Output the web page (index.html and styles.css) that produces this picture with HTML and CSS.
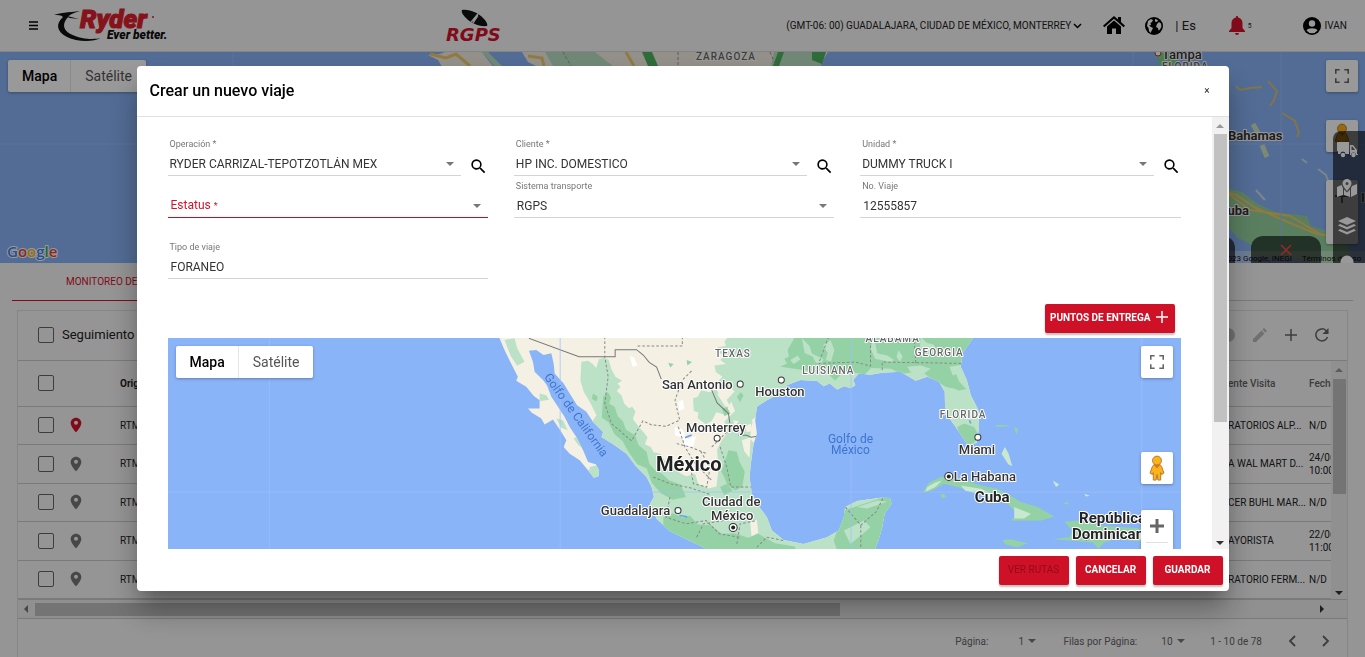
FILE: index.html
```html
<!DOCTYPE html>
<html lang="es">

<head>
    <meta charset="UTF-8">
    <title>RGPS - Crear un nuevo viaje</title>
    <link rel="stylesheet" href="styles.css">
</head>

<body>
    <!-- iconos compartidos -->
    <svg class="sprite" aria-hidden="true">
        <symbol id="pin" viewBox="0 0 24 24">
            <path fill-rule="evenodd" d="M12 1C7.600 1 4 4.600 4 9c0 5.800 8 14 8 14s8-8.200 8-14c0-4.400-3.600-8-8-8zm0 10.500a3 3 0 1 1 0-6 3 3 0 0 1 0 6z"/>
        </symbol>
        <symbol id="search" viewBox="0 0 24 24">
            <path d="M15.500 14h-.8l-.3-.3A6.500 6.500 0 1 0 13.700 14.400l.3.3v.8l5 5 1.500-1.500-5-5zm-6 0a4.500 4.500 0 1 1 0-9 4.500 4.500 0 0 1 0 9z"/>
        </symbol>
        <symbol id="fullscreen" viewBox="0 0 18 18">
            <path d="M0 0v6h2V2h4V0H0zm16 0h-4v2h4v4h2V0h-2zm0 16h-4v2h6v-6h-2v4zM2 12H0v6h6v-2H2v-4z"/>
        </symbol>
        <symbol id="pegman" viewBox="0 0 16 28">
            <path fill="#fbb31c" stroke="#b1762a" d="M3 12.500l-2.500 7 2.500 1.500 1-2v8h3l1-6 1 6h3v-8l1 2 2.500-1.500-2.500-7-2-2.500H5z"/>
            <path fill="#e8711a" d="M4.500 10.500h7L8 14.500z"/>
            <circle cx="8" cy="6" r="4.800" fill="#fbb31c" stroke="#b1762a"/>
        </symbol>
        <symbol id="chevron" viewBox="0 0 12 12">
            <path d="M4 1l5 5-5 5" fill="none" stroke="currentColor" stroke-width="1.800"/>
        </symbol>
        <symbol id="plus" viewBox="0 0 12 12">
            <path d="M6 0v12M0 6h12" stroke="currentColor" stroke-width="1.500"/>
        </symbol>
    </svg>

    <header class="topbar">
        <button class="menu-btn" aria-label="Menú">
            <svg width="9" height="9" viewBox="0 0 9 9"><path d="M0 1h9M0 4.500h9M0 8h9" stroke="#000" stroke-width="1.500"/></svg>
        </button>
        <svg class="ryder" width="116" height="32" viewBox="0 0 116 32" role="img" aria-label="Ryder">
            <path fill="#111" d="M0 5c9-3 19-3 26-4-7 2-11 4-12 6-8 9-4 17 14 21 8 1.500 14 1 19 0-8 4-24 4-34-1C3 22 1 14 9 7 7 5 4 5 0 5z"/>
            <path fill="#111" d="M5 4l20 5-9-1z"/>
            <text x="26" y="18" class="ryder-name">Ryder</text>
            <text x="53" y="29" class="ryder-slogan">Ever better.</text>
            <circle cx="99" cy="7" r="1" fill="#e0202f"/>
        </svg>
        <svg class="rgps" width="58" height="34" viewBox="0 0 58 34" role="img" aria-label="RGPS">
            <path fill="#111" d="M16 1c8-1 16 3 21 8 3 3 5 6 4 8-8 1-16-3-21-8-3-3-5-6-4-8z"/>
            <path d="M33 3L24 14l4-3-2 5 6-9" fill="#fff" stroke="#e9e9e9"/>
            <text x="0" y="32" class="rgps-name">RGPS</text>
        </svg>
        <button class="timezone">(GMT-06: 00) GUADALAJARA, CIUDAD DE MÉXICO, MONTERREY
            <svg width="9" height="6" viewBox="0 0 9 6"><path d="M1 1l3.500 3.500L8 1" fill="none" stroke="#000" stroke-width="1.500"/></svg>
        </button>
        <button class="icon-btn home" aria-label="Inicio">
            <svg width="22" height="19" viewBox="0 0 22 19"><path d="M11 0l4 3.500V1h3v5l4 3.700-1.300 1.500L11 2.800l-9.700 8.400L0 9.700zM11 4.500l7 6V18h-5v-5.500H9V18H4v-7.500z"/></svg>
        </button>
        <button class="lang">
            <svg width="18" height="18" viewBox="0 0 18 18"><circle cx="9" cy="9" r="9"/><path fill="#fff" d="M3 4l3-2 2 1-1 2-1.500 1 .5 2-2 .5 2 1.500 2 1-1.500 3-1 2-1.500-2-.5-3L2 9zM10 2l3 1-1 2-2-.5zM12 7l2-2 2 1.500.5 3-1.500 3-1.500 1-.5-2.500-2-1z"/></svg>
            <span>| Es</span>
        </button>
        <button class="bell">
            <svg width="16" height="19" viewBox="0 0 16 19"><path fill="#d6122b" d="M8 0a1 1 0 0 1 1 1.500c3 .5 4.500 3 4.500 5.500v5L16 15v1H0v-1l2.500-3V7C2.500 4.500 4 2 7 1.500A1 1 0 0 1 8 0zM6 17h4a2 2 0 0 1-4 0z"/></svg>
            <sup>5</sup>
        </button>
        <button class="user">
            <svg width="18" height="18" viewBox="0 0 18 18"><circle cx="9" cy="9" r="9"/><circle cx="9" cy="6.500" r="3.200" fill="#fff"/><path fill="#fff" d="M3.500 13.500c1-3 10-3 11 0A7 7 0 0 1 3.500 13.500z"/></svg>
            IVAN
        </button>
    </header>

    <section class="map page-map">
        <svg class="map-canvas" viewBox="0 0 1365 211" preserveAspectRatio="xMidYMin slice">
            <rect width="1365" height="211" fill="#8ab4f8"/>
            <path fill="#f5f0e4" d="M428 3l12-1 5-2h37l6 8 8 10h-52l-6-10zM522 0h306l-5 8-6 8H540l-12-6z"/>
            <path fill="#bbe2c6" d="M545 0h50l10 8 8 6h-60zM774 0h52l-5 14h-50zM482 0h6l14 14h-8z"/>
            <path fill="#4fb45f" d="M642 0h10l6 14h-10zM778 0h6l-5 14h-6zM812 0h14l-4 12-10-4z"/>
            <path d="M430 2l16 4 10-4 14 12M528 4l14 2 2 8M626 0l8 14" fill="none" stroke="#f0cc6e" stroke-width="3"/>
            <path d="M563 0l8 14M678 0v14M770 0l6 14" fill="none" stroke="#999" stroke-dasharray="3 2"/>
            <path fill="#7fd083" d="M1154 0l4 8 2 8h16V0z"/>
            <!-- Bahamas -->
            <path d="M1236 34l4 4 10-2 12-1M1268 29l9 10-3 9-4 6M1282 61l13 8 4 12-2 4" fill="none" stroke="#d5c37c" stroke-width="2"/>
            <path d="M1253 72l5 9M1262 93l5 12" fill="none" stroke="#cfe5c4" stroke-width="5"/>
            <path d="M1302 107l5 4M1318 117l8 6 3 8M1256 138l9 10" fill="none" stroke="#cfe0e5" stroke-width="2"/>
            <!-- Cuba -->
            <path fill="#95d3a0" d="M1200 128l30 9 12 3 16 12 17 8 32 4 4 10 20 6 16 12 4 18-30 2-22-5-14-2-36-1 4-10-16-9-12-14-25-8z"/>
            <path d="M1210 135l26 8 20 13 34 15 24 10 20 4M1226 140l24 18 40 6 30 18" fill="none" stroke="#efcb6b" stroke-width="2"/>
            <path d="M1133 0v211M1281 0v211M233 0v211M0 92h1365" stroke="#9cc1fa" fill="none"/>
            <text x="696" y="8" class="state">ZARAGOZA</text>
            <circle cx="1158" cy="1" r="3" fill="#fff" stroke="#b33"/>
            <text x="1162" y="7" class="city">Tampa</text>
            <text x="1162" y="18" class="state">FLORIDA</text>
            <text x="1228" y="88" class="city heavy">Bahamas</text>
            <text x="1219" y="163" class="city heavy">Cuba</text>
            <text x="1361" y="150" class="city">I</text>
            <text x="7" y="205" class="google"><tspan fill="#4285f4">G</tspan><tspan fill="#ea4335">o</tspan><tspan fill="#fbbc05">o</tspan><tspan fill="#4285f4">g</tspan><tspan fill="#34a853">l</tspan><tspan fill="#ea4335">e</tspan></text>
            <rect x="1222" y="199" width="143" height="12" fill="#f5f5f5" opacity=".4"/>
            <text x="1223" y="209" class="legal">2023 Google, INEGI</text>
            <text x="1302" y="209" class="legal">Términos de uso</text>
        </svg>
        <div class="map-type">
            <button class="active">Mapa</button>
            <button>Satélite</button>
        </div>
        <div class="map-tools">
            <button class="tool" aria-label="Pantalla completa"><svg width="14" height="14"><use href="#fullscreen"/></svg></button>
            <button class="tool" aria-label="Street View"><svg width="16" height="26"><use href="#pegman"/></svg></button>
            <button class="tool zoom" aria-label="Acercar"><svg width="14" height="14"><use href="#plus"/></svg></button>
        </div>
        <div class="bottom-tabs">
            <span class="bottom-tab"></span>
            <button class="bottom-tab" aria-label="Cerrar">
                <svg width="12" height="12" viewBox="0 0 12 12"><path d="M1 1l10 10M11 1L1 11" stroke="#ff4436" stroke-width="1.500"/></svg>
            </button>
        </div>
        <nav class="side-tools">
            <button aria-label="Unidades"><svg width="22" height="18" viewBox="0 0 22 18"><path d="M1 1h12v12H9.500a2.500 2.500 0 0 0-5 0H2V10H1zM14 4h3l4 5v4h1v1h-2a2.500 2.500 0 0 0-5 0h-1zM15.500 5.500V9H19l-2.500-3.500z" fill-rule="evenodd"/><circle cx="7" cy="14" r="2.200"/><circle cx="17.500" cy="14" r="2.200"/></svg></button>
            <button aria-label="Geocercas"><svg width="20" height="18" viewBox="0 0 20 18"><path fill-rule="evenodd" d="M10 0a4.500 4.500 0 0 1 4.500 4.500C14.500 7 10 12 10 12S5.500 7 5.500 4.500A4.500 4.500 0 0 1 10 0zm0 3a1.500 1.500 0 1 0 0 3 1.500 1.500 0 0 0 0-3z"/><path d="M0 8l4.500-2L6 9v7l-6 2zM7 10.500l3 3 3-3V18l-6-2zM14 9l1-2 5-2v10l-6 3z"/></svg></button>
            <button aria-label="Capas"><svg width="18" height="18" viewBox="0 0 18 18"><path d="M9 0l9 4-9 4-9-4zM2 7l7 3 7-3 2 1.500-9 4-9-4zM2 12l7 3 7-3 2 1.500-9 4-9-4z"/></svg></button>
            <button aria-label="Buscar"><svg width="14" height="18" viewBox="0 0 14 18"><circle cx="7" cy="7" r="6.500"/></svg></button>
        </nav>
    </section>

    <main class="page">
        <div class="tabs"><a href="#viajes" class="tab">MONITOREO DE VIAJES</a></div>
        <div class="card">
            <div class="card-head">
                <label><input type="checkbox"> Seguimiento</label>
                <div class="card-actions">
                    <button aria-label="Info"><svg width="14" height="14" viewBox="0 0 14 14"><circle cx="7" cy="7" r="7" fill="#bbb"/></svg></button>
                    <button aria-label="Editar"><svg width="14" height="14" viewBox="0 0 14 14"><path fill="#bbb" d="M0 11l8.500-8.500 3 3L3 14H0zM9.500 1.500L11 0l3 3-1.500 1.500z"/></svg></button>
                    <button aria-label="Agregar"><svg width="12" height="12"><use href="#plus"/></svg></button>
                    <button aria-label="Actualizar"><svg width="14" height="14" viewBox="0 0 14 14"><path d="M12.500 9A6 6 0 1 1 11 2.500L13 4.500" fill="none" stroke="currentColor" stroke-width="1.500"/><path d="M13.500 0v6h-6z" fill="currentColor"/></svg></button>
                </div>
            </div>
            <div class="grid">
                <table>
                    <thead>
                        <tr>
                            <th class="col-check"><input type="checkbox" aria-label="Todos"></th>
                            <th class="col-pin"></th>
                            <th class="origin">Origen</th>
                            <th class="col-visit">ente Visita</th>
                            <th class="col-date">Fecha</th>
                        </tr>
                    </thead>
                    <tbody>
                        <tr>
                            <td><input type="checkbox" aria-label="Viaje 1"></td>
                            <td><svg class="pin late"><use href="#pin"/></svg></td>
                            <td>RTM</td>
                            <td>RATORIOS ALP...</td>
                            <td>N/D</td>
                        </tr>
                        <tr>
                            <td><input type="checkbox" aria-label="Viaje 2"></td>
                            <td><svg class="pin"><use href="#pin"/></svg></td>
                            <td>RTM</td>
                            <td>A WAL MART D...</td>
                            <td>24/06<br>10:00</td>
                        </tr>
                        <tr>
                            <td><input type="checkbox" aria-label="Viaje 3"></td>
                            <td><svg class="pin"><use href="#pin"/></svg></td>
                            <td>RTM</td>
                            <td>CER BUHL MAR...</td>
                            <td>N/D</td>
                        </tr>
                        <tr>
                            <td><input type="checkbox" aria-label="Viaje 4"></td>
                            <td><svg class="pin"><use href="#pin"/></svg></td>
                            <td>RTM</td>
                            <td>AYORISTA</td>
                            <td>22/06<br>11:00</td>
                        </tr>
                        <tr>
                            <td><input type="checkbox" aria-label="Viaje 5"></td>
                            <td><svg class="pin"><use href="#pin"/></svg></td>
                            <td>RTM</td>
                            <td>RATORIO FERM...</td>
                            <td>N/D</td>
                        </tr>
                    </tbody>
                </table>
                <div class="scroll-y"><i class="up"></i><span class="thumb"></span><i class="down"></i></div>
            </div>
            <div class="scroll-x"><i class="left"></i><span class="track"><span class="thumb"></span></span><i class="right"></i></div>
            <div class="pager">
                <label for="pagina">Página:</label>
                <span class="mini-select"><select id="pagina"><option>1</option></select><i class="down"></i></span>
                <label for="filas">Filas por Página:</label>
                <span class="mini-select rows"><select id="filas"><option>10</option></select><i class="down"></i></span>
                <span class="range">1 - 10 de 78</span>
                <button aria-label="Anterior"><svg class="prev" width="12" height="12"><use href="#chevron"/></svg></button>
                <button aria-label="Siguiente"><svg width="12" height="12"><use href="#chevron"/></svg></button>
            </div>
        </div>
    </main>

    <div class="overlay">
        <div class="dialog" role="dialog" aria-labelledby="dialogTitle">
            <div class="dialog-head">
                <h1 id="dialogTitle">Crear un nuevo viaje</h1>
                <button class="close" aria-label="Cerrar">×</button>
            </div>
            <div class="dialog-main">
                <div class="dialog-body">
                    <form class="fields">
                        <div class="with-search">
                            <div class="field">
                                <label for="operacion">Operación *</label>
                                <div class="control"><select id="operacion"><option>RYDER CARRIZAL-TEPOTZOTLÁN MEX</option></select><i class="down"></i></div>
                            </div>
                            <button type="button" aria-label="Buscar operación"><svg width="19" height="19"><use href="#search"/></svg></button>
                        </div>
                        <div class="with-search">
                            <div class="field">
                                <label for="cliente">Cliente *</label>
                                <div class="control"><select id="cliente"><option>HP INC. DOMESTICO</option></select><i class="down"></i></div>
                            </div>
                            <button type="button" aria-label="Buscar cliente"><svg width="19" height="19"><use href="#search"/></svg></button>
                        </div>
                        <div class="with-search">
                            <div class="field">
                                <label for="unidad">Unidad *</label>
                                <div class="control"><select id="unidad"><option>DUMMY TRUCK I</option></select><i class="down"></i></div>
                            </div>
                            <button type="button" aria-label="Buscar unidad"><svg width="19" height="19"><use href="#search"/></svg></button>
                        </div>
                        <div class="field indent invalid">
                            <label for="estatus">Estatus <small>*</small></label>
                            <div class="control"><select id="estatus"><option></option></select><i class="down"></i></div>
                        </div>
                        <div class="field indent">
                            <label for="sistema">Sistema transporte</label>
                            <div class="control"><select id="sistema"><option>RGPS</option></select><i class="down"></i></div>
                        </div>
                        <div class="field indent">
                            <label for="viaje">No. Viaje</label>
                            <div class="control"><input id="viaje" type="text" value="12555857"></div>
                        </div>
                        <div class="field indent last">
                            <label for="tipo">Tipo de viaje</label>
                            <div class="control"><input id="tipo" type="text" value="FORANEO"></div>
                        </div>
                    </form>
                    <div class="delivery">
                        <button class="btn">PUNTOS DE ENTREGA <svg width="12" height="12"><use href="#plus"/></svg></button>
                    </div>
                    <div class="map">
                        <svg class="map-canvas" viewBox="0 0 1013 211" preserveAspectRatio="xMidYMin slice">
                            <rect width="1013" height="211" fill="#8ab4f8"/>
                            <g transform="translate(322 -8) scale(.3333)">
                                <clipPath id="land">
                                    <path d="M28 20L45 60 62 95 85 140 80 152 110 170 132 197 150 210 150 235 115 235 127 248 155 265 165 283 190 268 215 305 230 330 222 350 240 370 270 390 295 420 312 442 326 438 328 420 318 402 295 395 280 360 260 320 240 290 225 260 205 230 185 200 172 165 160 150 135 125 130 95 118 62 140 60 162 75 185 70 192 100 195 130 222 160 240 190 262 225 290 245 310 275 340 305 335 320 370 342 410 370 440 410 470 440 485 470 492 500 480 520 500 565 540 602 580 622 640 650 700 700H1150L1152 660 1165 625 1175 590 1182 550 1203 520 1198 503 1170 502 1100 512 1064 530 1060 560 1045 600 1010 620 940 640 880 628 845 600 830 560 800 520 785 490 778 440 782 400 790 342 800 310 795 270 800 230 830 210 870 190 890 165 930 150 980 153 1000 168 1018 160 1040 178 1062 168 1080 174 1095 165 1088 150 1105 130 1140 134 1175 128 1230 125 1275 152 1310 140 1345 155 1362 185 1363 230 1380 270 1395 290 1415 320 1430 343 1458 338 1465 290 1463 240 1440 195 1428 150 1410 110 1415 70 1450 20Z"/>
                                </clipPath>
                                <g clip-path="url(#land)">
                                    <rect width="1500" height="720" fill="#f5f0e4"/>
                                    <path fill="#bbe2c6" d="M45 30l30-5 8 30 22 40-22 12-20-30zM200 265l20 5 14 30-20-8zM252 325l12-8 16 38-14-10zM300 410l40-10v50h-50zM150 190l20 5 8 14-28 4z"/>
                                    <path fill="#bbe2c6" d="M275 95l20-3 14 10 10 12 8-26 16-6 14 8 8 28 12 22 20 12-4 18-12 12 14 14 8 24 14 14 10-4 10 14-8 22 16 22 18 20 10 14-8 20 18 8 8 16 20 4 14 22 30 14 14 22 20 10 26-8 10 30 30 14 24-6 6-50-4-60 12-24 20-30-10-30 30-30 30-10 24 40-8 50 22 26 10 80 500 20v280H500l-40-160-30-120-90-80-30-45-10-40 20-30-20-40-18-30-10-34z"/>
                                    <path fill="#bbe2c6" d="M715 20l-12 14 4 14-24 4-4 12 22 12-10 14 16 12-34 4 4 20 20 14-10 10 14 28 22-4 10 10-22 24-18-4-14-26-20 8-26-6-10 20-14 4 2 38 14 6-2 16 24 18 18-10 14-26 24 8 20-40 14 34 18 12 28 10 30-20 60-60H1500V0H715z"/>
                                    <path fill="#94d2a5" d="M340 200l14-14 10 16-6 18 16 10 10 28 16 16 8 24 28 18 10 28 24 20 8 36 20 22 18 8 22 20 34 12 16 38-40 8-36-20-26-30-16-44-28-12-24-34-20-36-24-20-18-36-20-14zM715 360l25 4 8 30 16 30-8 46-20 10-24-16-8-20-10-20zM695 235l16-4 10 20-18 6z"/>
                                    <path fill="#94d2a5" d="M870 110l20-10-8-14 14-6-4-20 20-36h600v40l-64 16 10 26-12 24-30-26-40 6 16 40-60 6-40-34-60 10-30-16-60-2-20 20-60-12-28 30-30-30-24 4zM1320 130l30-4 26 16 20-10 10 24 20 20-6 14-28-14-28-6-30-20zM1430 200l14 8 12 30-14-8zM1060 540l150-50-20 200h-140l-20-60zM520 560l28-12 30 14 22-6 24 26 40 2 30 26 40-2 40 14 30-12 50 28 60 10 10 50H600l-80-70z"/>
                                    <path fill="#bbe2c6" d="M935 25l22 22 8 24 34 16-8 18-16-10-8-16-24-10zM1020 30l12 30-10 34-16-4 6-20-14-24zM1150 20l10 50 30 6 20 14-10 6-46-10-14-30zM1290 20l18 18 22 6 12 32-18-2-12-18-24-4zM1224 60l12 20-8 16-10-16zM1060 600l60-30 20 20-60 50zM1100 530l60-20 30 4-60 20zM900 90l22-14 8 12-20 14zM1250 110l40-4 30 10-20 14-40-4z"/>
                                    <path fill="#bbe2c6" d="M1360 190l100-20 20 180h-70l-50-90z"/>
                                    <path fill="#94d2a5" d="M1400 290l20-10 30 10 16 30-30 30-30-30z"/>
                                    <path fill="#f5f0e4" d="M383 160l20-12 24 12-6 18 20 0 6 14-10 20-14-8 2-14-22-6zM475 205l14 6-4 14zM680 190l24 8 16 30-14 2zM625 158l16-10 6 14zM755 330l26-8-3 60-16-20zM780 575l20-8 4 40-20 10zM764 288l18-8 6 22-18 4zM730 270l14 2 4 30-16-10z"/>
                                    <path fill="#fff" d="M420 78l14 6 8 22-14 4zM565 215l14-6 4 26-16 8zM555 290l20 6 20 30 24-10-10 34-24 2-8-30-22-6z"/>
                                    <path fill="#94d2a5" d="M535 98l16 4-10 10zM590 90l16 6-14 10zM690 470l20-10 18 20-26 14zM310 190l14 10-4 14-14-8zM740 200l12-14 8 10-10 20z"/>
                                    <path fill="none" stroke="#6aa3ee" stroke-width="5" d="M585 322l20-8M568 555l24 4M1436 270l4 10"/>
                                    <path fill="none" stroke="#777" stroke-width="3" d="M118 25l150 55h108v-21h64l20 16 18 22 22 14 14 36M665 180l16 38 34 32 4 28M745 315l24 0 14 6 22-4"/>
                                    <path fill="none" stroke="#888" stroke-width="3" stroke-dasharray="8 6" d="M345 20v60l10 60-10 80 20 60 60 52 34-60 26 12 44 4 40-18-14-60 22-60 30-30M577 20v28H440M565 290l20 60 30 50 50 50M490 440l50 20 60 12 60 20M665 350l40-40 40-30M690 350l20 60 12 60h60M540 500l-12 60 60 20 60-10 40 40 60 10M600 400l10 60 40 10 10-60-30-50M560 340l40 10 50 20M620 620l20-40 60-10M740 640l10-60 50-10M800 650l30-30 50 10M985 100l110-4 45 12V30M1175 120v-24l240 4M1270 20l6 84M1015 20l-30 80M1065 530l46 54 46-40 20-40M1111 585v75h-70"/>
                                </g>
                                <g transform="translate(930 0)">
                                    <path fill="#94d2a5" d="M365 487l20-30 35-17 30 0 50 10 40 15 50 10 30 15 40 25 50 15 50 28-40 12h-90l20-20-30-30-60-20-60-20-30-10-40-10-35 20zM755 625l50-5 10-18-25-28 40-4 60 14 130 10 20 40-100-8-30 10-18 18-17-18zM605 628l25-2 50 12-30 12-36-8zM785 520l12-6 8 8zM418 492l12-2 6 10-10 4zM585 284l35 0 0 4-34 2zM640 290l12 6-6 18z"/>
                                    <path fill="#c8e8d0" d="M602 370l10-20 12 22 10 36-12-6zM480 465l60 10 50 22 30 6-6 12-60-20-60-14zM640 530l50 20-20 14-30 0zM380 470l24-14 20-6-20 20-30 14zM755 450l20 12-10 8zM850 490l16 6-12 2z"/>
                                    <path fill="none" stroke="#666" stroke-width="3" stroke-dasharray="7 5" d="M856 600v30M1024 632h30"/>
                                </g>
                            </g>
                            <path d="M102.500 0v211M392.500 0v211M682.500 0v211M972.500 0v211M0 153.500h1013" stroke="#9cc1fa" opacity=".7"/>
                            <g class="sea">
                                <text transform="translate(376 39) rotate(54)">Golfo de California</text>
                                <text x="682" y="105" text-anchor="middle">Golfo de</text>
                                <text x="682" y="116" text-anchor="middle">México</text>
                            </g>
                            <g class="state">
                                <text x="547" y="19">TEXAS</text>
                                <text x="634" y="36">LUISIANA</text>
                                <text x="697" y="4">ALABAMA</text>
                                <text x="746" y="18">GEORGIA</text>
                                <text x="771" y="80">FLORIDA</text>
                            </g>
                            <g class="city">
                                <text x="494" y="51">San Antonio</text>
                                <text x="587" y="58">Houston</text>
                                <text x="518" y="94">Monterrey</text>
                                <text x="433" y="177">Guadalajara</text>
                                <text x="534" y="168">Ciudad de</text>
                                <text x="543" y="181">México</text>
                                <text x="790" y="116">Miami</text>
                                <text x="785" y="143">La Habana</text>
                            </g>
                            <g class="country">
                                <text x="488" y="133" class="big">México</text>
                                <text x="806" y="164">Cuba</text>
                                <text x="910" y="184">República</text>
                                <text x="903" y="200">Dominicana</text>
                            </g>
                            <g fill="#fff" stroke="#333">
                                <circle cx="572" cy="46" r="3"/>
                                <circle cx="613" cy="42" r="3"/>
                                <circle cx="549" cy="100" r="3"/>
                                <circle cx="510" cy="172" r="3"/>
                                <circle cx="809" cy="99" r="3"/>
                                <circle cx="565" cy="189" r="4"/>
                                <circle cx="780" cy="138" r="4"/>
                            </g>
                            <g fill="#222"><circle cx="565" cy="189" r="2"/><circle cx="780" cy="138" r="2"/></g>
                        </svg>
                        <div class="map-type">
                            <button class="active">Mapa</button>
                            <button>Satélite</button>
                        </div>
                        <div class="map-tools roomy">
                            <button class="tool" aria-label="Pantalla completa"><svg width="14" height="14"><use href="#fullscreen"/></svg></button>
                            <button class="tool" aria-label="Street View"><svg width="16" height="26"><use href="#pegman"/></svg></button>
                            <button class="tool zoom" aria-label="Acercar"><svg width="22" height="24" viewBox="0 0 22 24"><path d="M11 0v14M4 7h14" stroke="#666" stroke-width="3"/><path d="M0 23.500h22" stroke="#e0e0e0"/></svg></button>
                        </div>
                    </div>
                </div>
                <div class="scroll-y"><i class="up"></i><span class="thumb"></span><i class="down"></i></div>
            </div>
            <div class="dialog-foot">
                <button class="btn" disabled>VER RUTAS</button>
                <button class="btn">CANCELAR</button>
                <button class="btn">GUARDAR</button>
            </div>
        </div>
    </div>
</body>

</html>
```

FILE: styles.css
```css
* {
    box-sizing: border-box;
}

body {
    margin: 0;
    height: 100vh;
    display: flex;
    flex-direction: column;
    overflow: hidden;
    background: #f8f8f8;
    color: #222;
    font-family: Roboto, "Liberation Sans", sans-serif;
    font-size: 10px;
}

button {
    display: flex;
    align-items: center;
    justify-content: center;
    padding: 0;
    border: 0;
    background: none;
    color: inherit;
    font: inherit;
    cursor: pointer;
}

select,
input[type="text"] {
    appearance: none;
    width: 100%;
    margin: 0;
    padding: 0;
    border: 0;
    outline: 0;
    background: none;
    color: inherit;
    font: inherit;
}

input[type="checkbox"] {
    appearance: none;
    display: block;
    width: 16px;
    height: 16px;
    margin: 0;
    border: 1px solid #666;
    border-radius: 2px;
}

.sprite {
    position: absolute;
    width: 0;
    height: 0;
}

/* arrows */
.down, .up {
    border: 4px solid transparent;
    border-bottom-width: 0;
    border-top-color: #777;
}

.up {
    border-width: 0 4px 4px;
    border-bottom-color: #999;
}

.left, .right {
    border: 4px solid transparent;
    border-left-width: 0;
    border-right-color: #777;
}

.right {
    border-width: 4px 0 4px 4px;
    border-left-color: #333;
}

/* top bar */
.topbar {
    display: flex;
    flex: none;
    align-items: center;
    height: 52px;
    padding: 0 18px 0 29px;
    border-bottom: 1px solid #ddd;
    background: #f8f8f8;
}

.ryder {
    margin: 0 276px 0 16px;
    overflow: visible;
}

.ryder-name {
    fill: #e0202f;
    stroke: #e0202f;
    font-size: 26px;
    font-style: italic;
    font-weight: 900;
}

.ryder-slogan {
    fill: #111;
    font-size: 12px;
    font-style: italic;
    font-weight: 900;
}

.rgps {
    overflow: visible;
}

.rgps-name {
    fill: #d6122b;
    font-family: "DejaVu Sans", sans-serif;
    font-size: 18px;
    font-style: italic;
    font-weight: 700;
}

.timezone {
    gap: 2px;
    margin-left: auto;
}

.home {
    margin-left: 21px;
}

.lang {
    gap: 12px;
    margin-left: 20px;
    font-size: 13px;
}

.bell {
    gap: 3px;
    margin-left: 33px;
    font-size: 8px;
}

.user {
    gap: 4px;
    margin-left: 51px;
}

/* maps */
.map {
    position: relative;
    flex: 1;
    min-height: 0;
    overflow: hidden;
    background: #8ab4f8;
}

.page-map {
    flex: 0 0 211px;
}

.map-canvas {
    display: block;
    width: 100%;
    height: 100%;
}

.map-canvas text {
    paint-order: stroke;
    stroke: #fff;
    stroke-width: 2px;
    stroke-linejoin: round;
}

.state, .state text {
    fill: #666;
    font-size: 10px;
    font-weight: 500;
    letter-spacing: 1px;
}

.city, .city text {
    fill: #333;
    font-size: 13px;
    font-weight: 500;
}

.heavy {
    font-weight: 700;
}

.country {
    fill: #222;
    font-size: 15px;
    font-weight: 700;
}

.country .big {
    font-size: 20px;
}

.map-canvas .sea text {
    fill: #3f74cf;
    font-size: 12px;
    stroke: none;
}

.google {
    font-family: "Open Sans", sans-serif;
    font-size: 15px;
    font-weight: 600;
}

.map-canvas .legal {
    fill: #111;
    font-size: 8px;
    stroke: none;
}

.map-type {
    position: absolute;
    top: 8px;
    left: 8px;
    display: flex;
    height: 32px;
    border-radius: 2px;
    background: #fff;
    box-shadow: 0 1px 3px rgba(0, 0, 0, .3);
    color: #565656;
    font-size: 14px;
}

.map-type button {
    padding: 0 14px;
}

.map-type .active {
    padding-right: 13px;
    border-right: 1px solid #e6e6e6;
    color: #000;
    font-weight: 500;
}

.map-tools {
    position: absolute;
    top: 8px;
    right: 7px;
    display: flex;
    flex-direction: column;
    gap: 28px;
}

.map-tools.roomy {
    right: 8px;
    gap: 26px;
}

.tool {
    width: 32px;
    height: 32px;
    border-radius: 2px;
    background: #fff;
    box-shadow: 0 1px 3px rgba(0, 0, 0, .3);
    color: #666;
    fill: #666;
}

.tool.zoom {
    height: 64px;
    align-items: flex-start;
    padding-top: 9px;
}

.roomy .tool:nth-child(2) {
    margin-top: 48px;
}

.bottom-tabs {
    position: absolute;
    right: 44px;
    bottom: 0;
    display: flex;
    gap: 16px;
}

.bottom-tab {
    width: 70px;
    height: 27px;
    border-radius: 12px 12px 0 0;
    background: rgba(0, 0, 0, .6);
}

.side-tools {
    position: absolute;
    top: 79px;
    right: 0;
    display: flex;
    flex-direction: column;
    gap: 20px;
    width: 32px;
    height: 132px;
    padding: 10px 4px 0 0;
    overflow: hidden;
    border-radius: 8px 0 0;
    background: rgba(0, 0, 0, .6);
    fill: #fff;
}

/* trips list */
.page {
    display: flex;
    flex: 1;
    flex-direction: column;
    min-height: 0;
    padding: 0 12px;
}

.tabs {
    flex: none;
    height: 38px;
    border-bottom: 1px solid #ccc;
}

.tab {
    display: inline-block;
    height: 38px;
    padding: 0 54px;
    border-bottom: 1px solid #d6122b;
    color: #d6122b;
    line-height: 38px;
    text-decoration: none;
}

.card {
    flex: 1;
    margin: 9px 5px 0;
    border: 1px solid #e0e0e0;
    border-bottom: 0;
}

.card-head {
    display: flex;
    align-items: center;
    justify-content: space-between;
    height: 50px;
    padding: 0 18px 2px 20px;
    border-bottom: 1px solid #ccc;
}

.card-head label {
    display: flex;
    align-items: center;
    gap: 8px;
    font-size: 13px;
}

.card-actions {
    display: flex;
    gap: 18px;
    color: #666;
}

.grid {
    display: flex;
    height: 239px;
    border-bottom: 1px solid #ccc;
}

table {
    flex: 1;
    width: 0;
    border-collapse: collapse;
    table-layout: fixed;
}

th, td {
    padding: 0;
    overflow: hidden;
    border-bottom: 1px solid #ccc;
    line-height: 13px;
    text-align: left;
    white-space: nowrap;
}

th {
    height: 45px;
    color: #666;
    font-weight: 500;
}

td {
    height: 38px;
}

th.origin {
    color: #222;
    font-weight: 700;
}

th:first-child, td:first-child {
    padding-left: 20px;
}

.col-check {
    width: 50px;
}

.col-pin {
    width: 52px;
}

.col-visit {
    width: 81px;
}

.col-date {
    width: 22px;
}

.pin {
    display: block;
    width: 16px;
    height: 18px;
    fill: #777;
}

.pin.late {
    fill: #d6122b;
}

.scroll-y {
    display: flex;
    flex-direction: column;
    align-items: center;
    width: 16px;
    padding: 7px 0 4px;
    background: #f1f1f1;
}

.scroll-y .thumb {
    width: 13px;
    height: 115px;
    margin: 7px 0 auto;
    background: #c1c1c1;
}

.scroll-y .down {
    border-top-color: #333;
}

.scroll-x {
    display: flex;
    align-items: center;
    height: 19px;
    padding: 0 23px 0 6px;
    border-bottom: 1px solid #ccc;
    background: #f0f0f0;
}

.scroll-x .track {
    flex: 1;
    margin: 0 7px;
}

.scroll-x .thumb {
    display: block;
    width: 63%;
    height: 13px;
    background: #c1c1c1;
}

.pager {
    display: flex;
    align-items: center;
    justify-content: flex-end;
    height: 44px;
    padding-right: 16px;
    color: #666;
}

.mini-select {
    display: flex;
    align-items: center;
    width: 18px;
    margin: 0 27px 0 30px;
}

.mini-select.rows {
    width: 24px;
    margin: 0 25px 0 24px;
}

.pager button {
    margin-left: 20px;
}

.range {
    margin-right: 5px;
}

.prev {
    transform: scaleX(-1);
}

/* dialog */
.overlay {
    position: fixed;
    inset: 0;
    display: flex;
    align-items: center;
    justify-content: center;
    background: rgba(0, 0, 0, .4);
}

.dialog {
    display: flex;
    flex-direction: column;
    width: 80%;
    height: 80%;
    border-radius: 4px;
    background: #fff;
    box-shadow: 0 11px 15px -7px rgba(0, 0, 0, .2), 0 20px 30px rgba(0, 0, 0, .3);
}

.dialog-head {
    display: flex;
    align-items: center;
    justify-content: space-between;
    height: 51px;
    padding: 0 19px 0 13px;
    border-bottom: 1px solid #e0e0e0;
}

.dialog-head h1 {
    margin: 0;
    color: #000;
    font-size: 16px;
    font-weight: 500;
}

.dialog-main {
    display: flex;
    flex: 1;
    min-height: 0;
}

.dialog-body {
    display: flex;
    flex: 1;
    flex-direction: column;
    padding: 17px 31px 0;
}

.dialog-main .scroll-y {
    width: 17px;
}

.dialog-main .scroll-y .thumb {
    height: 288px;
    margin-top: 6px;
}

.fields {
    display: grid;
    grid-template-columns: repeat(3, 1fr);
    column-gap: 26px;
}

.field {
    display: grid;
    flex: 1;
    grid-template-rows: 19px 23px;
    color: #333;
    font-size: 12px;
}

.field label {
    padding-left: 2px;
    color: #777;
    font-size: 9px;
    line-height: 20px;
}

.control {
    display: flex;
    align-items: center;
    padding: 0 7px 0 2px;
    border-bottom: 1px solid #d4d4d4;
}

.control .down {
    flex: none;
}

.indent .control {
    padding-left: 3px;
}

/* empty select: the label rests on the value line */
.invalid label {
    grid-area: 2 / 1;
    padding-left: 3px;
    color: #d6122b;
    font-size: 12px;
}

.invalid .control {
    grid-area: 2 / 1;
    border-bottom: 1px solid #c2101f;
}

.invalid small {
    font-size: 9px;
}

.field.last {
    margin-top: 19px;
}

.with-search {
    display: flex;
    gap: 8px;
}

.with-search button {
    padding-top: 23px;
}

.delivery {
    display: flex;
    justify-content: flex-end;
    padding: 25px 6px 5px 0;
}

.btn {
    gap: 5px;
    min-width: 70px;
    height: 29px;
    padding: 0 7px 2px 5px;
    border-radius: 2px;
    background: #ce1126;
    box-shadow: 0 2px 2px rgba(0, 0, 0, .25);
    color: #fff;
    font-weight: 700;
}

.btn:disabled {
    color: rgba(0, 0, 0, .3);
    font-weight: 400;
}

.dialog-foot {
    display: flex;
    align-items: center;
    justify-content: flex-end;
    gap: 7px;
    height: 42px;
    padding-right: 6px;
}

.dialog-foot .btn {
    padding: 0 5px 2px;
}
```
